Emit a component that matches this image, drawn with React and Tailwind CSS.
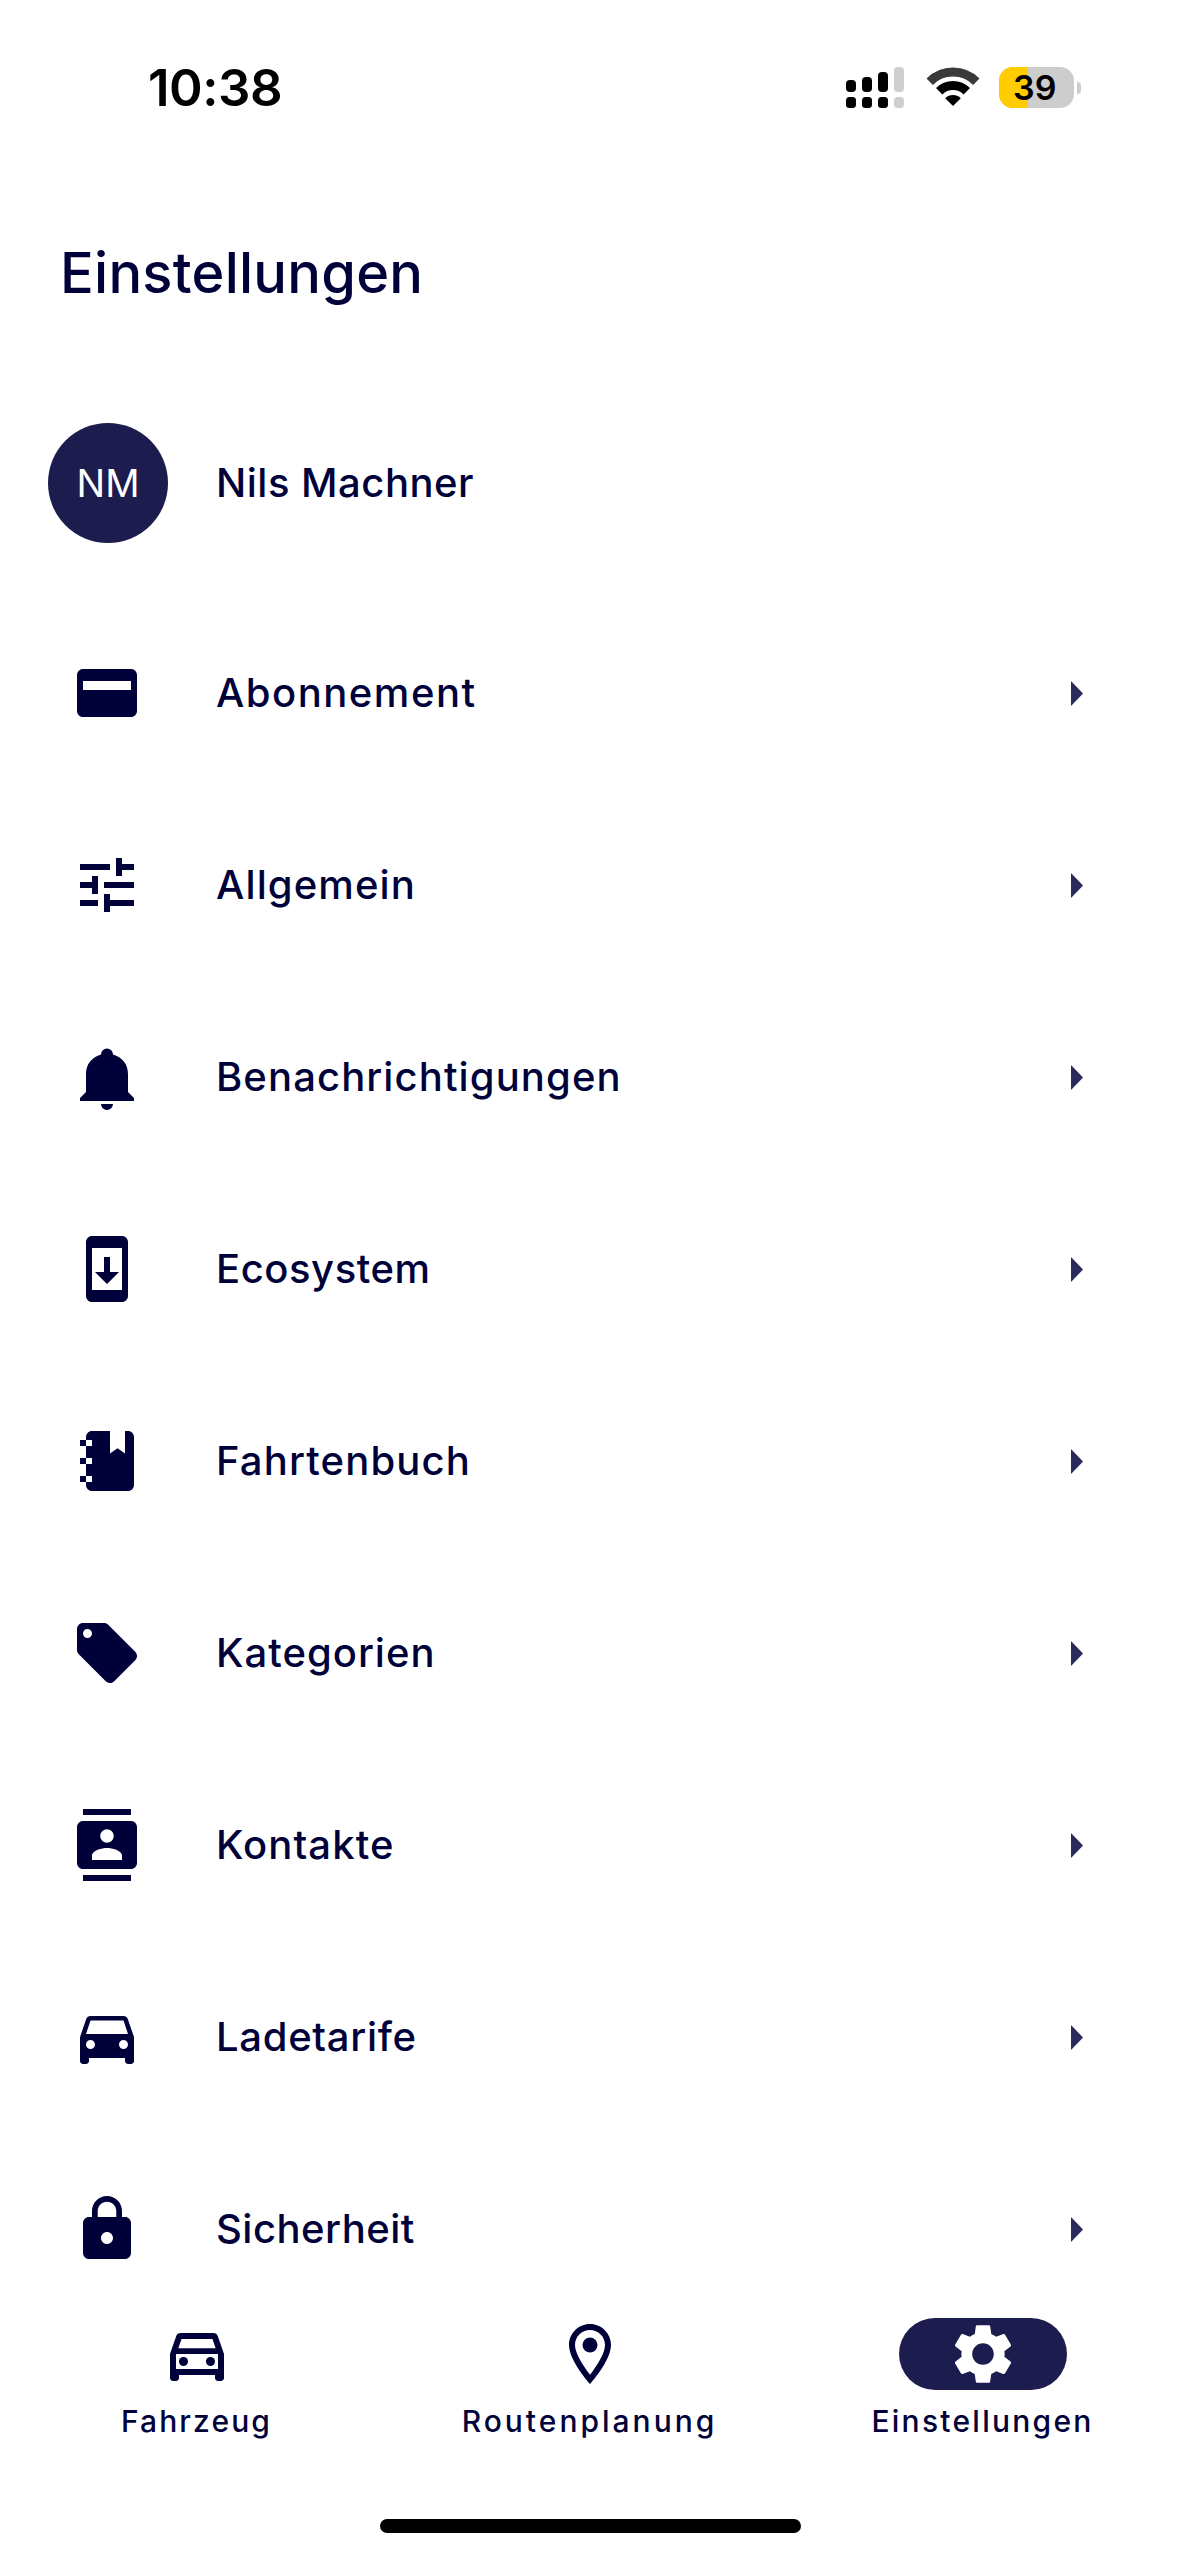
import React from "react";

const Icon = ({ d, children, box = "0 0 24 24", className = "w-[72px] h-[72px] shrink-0 fill-[#01013a]" }) => (
  <svg viewBox={box} className={className}>
    {d && <path d={d} fillRule="evenodd" />}
    {children}
  </svg>
);

const carFilled =
  "M18.92 6.01C18.72 5.42 18.16 5 17.5 5h-11c-.66 0-1.21.42-1.42 1.01L3 12v8c0 .55.45 1 1 1h1c.55 0 1-.45 1-1v-1h12v1c0 .55.45 1 1 1h1c.55 0 1-.45 1-1v-8l-2.08-5.99zM6.5 16c-.83 0-1.5-.67-1.5-1.5S5.67 13 6.5 13s1.5.67 1.5 1.5S7.33 16 6.5 16zm11 0c-.83 0-1.5-.67-1.5-1.5s.67-1.5 1.5-1.5 1.5.67 1.5 1.5-.67 1.5-1.5 1.5zM5 11l1.5-4.5h11L19 11H5z";
const carOutline =
  "M18.92 6.01C18.72 5.42 18.16 5 17.5 5h-11c-.66 0-1.21.42-1.42 1.01L3 12v8c0 .55.45 1 1 1h1c.55 0 1-.45 1-1v-1h12v1c0 .55.45 1 1 1h1c.55 0 1-.45 1-1v-8l-2.08-5.99zM6.85 7h10.29l1.08 3.11H5.77L6.85 7zM19 17H5v-5h14v5z";
const gear =
  "M19.14 12.94c.04-.3.06-.61.06-.94 0-.32-.02-.64-.07-.94l2.03-1.58c.18-.14.23-.41.12-.61l-1.92-3.32c-.12-.22-.37-.29-.59-.22l-2.39.96c-.5-.38-1.03-.7-1.62-.94l-.36-2.54c-.04-.24-.24-.41-.48-.41h-3.84c-.24 0-.43.17-.47.41l-.36 2.54c-.59.24-1.13.57-1.62.94l-2.39-.96c-.22-.08-.47 0-.59.22L2.74 8.87c-.12.21-.08.47.12.61l2.03 1.58c-.05.3-.09.63-.09.94s.02.64.07.94l-2.03 1.58c-.18.14-.23.41-.12.61l1.92 3.32c.12.22.37.29.59.22l2.39-.96c.5.38 1.03.7 1.62.94l.36 2.54c.05.24.24.41.48.41h3.84c.24 0 .44-.17.47-.41l.36-2.54c.59-.24 1.13-.56 1.62-.94l2.39.96c.22.08.47 0 .59-.22l1.92-3.32c.12-.22.07-.47-.12-.61l-2.01-1.58zM12 15.6c-1.98 0-3.6-1.62-3.6-3.6s1.62-3.6 3.6-3.6 3.6 1.62 3.6 3.6-1.62 3.6-3.6 3.6z";

// tracking differs per label, the fallback font is narrower than the original in different letters
const rows = [
  { label: "Abonnement", track: "tracking-[1.5px]", d: "M20 4H4c-1.11 0-1.99.89-1.99 2L2 18c0 1.11.89 2 2 2h16c1.11 0 2-.89 2-2V6c0-1.11-.89-2-2-2zM4 8h16v3H4V8z" },
  { label: "Allgemein", track: "tracking-[1.1px]", d: "M3 17v2h6v-2H3zM3 5v2h10V5H3zm10 16v-2h8v-2h-8v-2h-2v6h2zM7 9v2H3v2h4v2h2V9H7zm14 4v-2H11v2h10zm-6-4h2V7h4V5h-4V3h-2v6z" },
  { label: "Benachrichtigungen", track: "tracking-[1.1px]", box: "21 21 72 72", d: "M30 81v-3l6-6V54c0-10 6-17 15-19.5a6 6 0 0 1 12 0C72 37 78 44 78 54v18l6 6v3zM51 84h12a6 6 0 0 1-12 0z" },
  { label: "Ecosystem", track: "tracking-[0.55px]", d: "M17 1.01 7 1c-1.1 0-2 .9-2 2v18c0 1.1.9 2 2 2h10c1.1 0 2-.9 2-2V3c0-1.1-.9-1.99-2-1.99zM17 19H7V5h10v14zm-1-6h-3V8h-2v5H8l4 4 4-4z" },
  { label: "Fahrtenbuch", track: "tracking-[1.15px]", d: "M7 2h6v7.5l2.5-1.75L18 9.5V2h1c1.1 0 2 .9 2 2v16c0 1.1-.9 2-2 2H7c-1.1 0-2-.9-2-2v-1h2v-2H5v-4h2v-2H5V7h2V5H5V4c0-1.1.9-2 2-2zM3 5h2v2H3zM3 11h2v2H3zM3 17h2v2H3z" },
  { label: "Kategorien", track: "tracking-[1px]", d: "M21.41 11.58l-9-9C12.05 2.22 11.55 2 11 2H4c-1.1 0-2 .9-2 2v7c0 .55.22 1.05.59 1.42l9 9c.36.36.86.58 1.41.58.55 0 1.05-.22 1.41-.59l7-7c.37-.36.59-.86.59-1.41 0-.55-.23-1.06-.59-1.42zM5.5 7C4.67 7 4 6.33 4 5.5S4.67 4 5.5 4 7 4.67 7 5.5 6.33 7 5.5 7z" },
  { label: "Kontakte", track: "tracking-[1.1px]", d: "M20 0H4v2h16V0zM4 24h16v-2H4v2zM20 4H4c-1.1 0-2 .9-2 2v12c0 1.1.9 2 2 2h16c1.1 0 2-.9 2-2V6c0-1.1-.9-2-2-2zm-8 2.75c1.24 0 2.25 1.01 2.25 2.25s-1.01 2.25-2.25 2.25S9.75 10.24 9.75 9 10.76 6.75 12 6.75zM17 17H7v-1.5c0-1.67 3.33-2.5 5-2.5s5 .83 5 2.5V17z" },
  { label: "Ladetarife", track: "tracking-[0.7px]", d: carFilled },
  { label: "Sicherheit", track: "tracking-[0.5px]", d: "M18 8h-1V6c0-2.76-2.24-5-5-5S7 3.24 7 6v2H6c-1.1 0-2 .9-2 2v10c0 1.1.9 2 2 2h12c1.1 0 2-.9 2-2V10c0-1.1-.9-2-2-2zm-6 9c-1.1 0-2-.9-2-2s.9-2 2-2 2 .9 2 2-.9 2-2 2zm3.1-9H8.9V6c0-1.71 1.39-3.1 3.1-3.1 1.71 0 3.1 1.39 3.1 3.1v2z" },
];

const StatusBar = () => (
  <div className="h-[146px] flex items-start justify-between pt-[60px] pl-[148px] pr-[98px]">
    <span className="text-[51px] leading-[56px] font-semibold text-black tracking-[-0.5px]">10:38</span>
    <div className="flex items-center pt-[7px]">
      <svg width="58" height="41" viewBox="0 0 58 41">
        <g fill="#000">
          <rect x="0" y="13" width="10" height="12" rx="4" />
          <rect x="16" y="10" width="10" height="15" rx="4" />
          <rect x="32" y="5" width="10" height="20" rx="4" />
          <rect x="0" y="30" width="10" height="11" rx="3.5" />
          <rect x="16" y="30" width="10" height="11" rx="3.5" />
          <rect x="32" y="30" width="10" height="11" rx="3.5" />
        </g>
        <g fill="#cfcfcf">
          <rect x="48" y="0" width="10" height="25" rx="3.5" />
          <rect x="48" y="30" width="10" height="11" rx="3.5" />
        </g>
      </svg>
      <svg width="54" height="41" viewBox="0 0 54 41" className="ml-[22px]">
        <path d="M3.7 14.7a33 33 0 0 1 46.6 0" fill="none" stroke="#3a3a3a" strokeWidth="9" />
        <path d="M13.2 24.2a19.500 19.500 0 0 1 27.6 0" fill="none" stroke="#000" strokeWidth="9" />
        <path d="M27 39l-7.800-7.800a11 11 0 0 1 15.600 0z" fill="#000" />
      </svg>
      <div className="ml-[19px] flex items-center gap-[3px]">
        <div className="relative w-[75px] h-[41px] rounded-[14px] overflow-hidden bg-[#cdcdcd]">
          <div className="w-[29px] h-full bg-[#ffcc00]" />
          <span className="absolute left-[14px] top-0 leading-[41px] text-[34px] font-semibold text-black">39</span>
        </div>
        <div className="w-[4px] h-[12px] rounded-r-full bg-[#cdcdcd]" />
      </div>
    </div>
  </div>
);

const Row = ({ label, d, box, track }) => (
  <div className="h-[192px] shrink-0 flex items-center pl-[71px] pr-[96px]">
    <Icon d={d} box={box} />
    <span className={`ml-[73px] flex-1 text-[40px] font-medium text-[#01013a] ${track}`}>{label}</span>
    <svg width="12" height="25" viewBox="0 0 12 25" className="fill-[#2b2b5b]">
      <path d="M0 0l12 12.5L0 25z" />
    </svg>
  </div>
);

const Tab = ({ label, track, active, children }) => (
  <div className="flex flex-col items-center">
    <div className={`w-[168px] h-[72px] rounded-full flex items-center justify-center ${active ? "bg-[#1c1c4e]" : ""}`}>
      {children}
    </div>
    <span className={`mt-[11px] text-[30px] leading-[40px] font-medium text-[#01013a] ${track}`}>{label}</span>
  </div>
);

export default function App() {
  return (
    <div className="w-[1179px] h-[2556px] bg-white flex flex-col overflow-hidden font-['Inter',sans-serif]">
      <StatusBar />
      <h1 className="h-[254px] shrink-0 flex items-center pl-[60px] text-[56px] tracking-[0.25px] font-medium text-[#01013a]">Einstellungen</h1>

      <div className="flex-1 min-h-0 overflow-hidden">
        <div className="h-[166px] mb-[31px] flex items-center pl-[48px]">
          <div className="w-[120px] h-[120px] rounded-full bg-[#1c1c4e] flex items-center justify-center text-white text-[38px]">NM</div>
          <span className="ml-[48px] text-[40px] font-medium text-[#01013a] tracking-[0.5px]">Nils Machner</span>
        </div>
        {rows.map((r) => (
          <Row key={r.label} {...r} />
        ))}
      </div>

      <div className="h-[266px] shrink-0 bg-white relative">
        <div className="grid grid-cols-3 pt-[28px]">
          <Tab label="Fahrzeug" track="tracking-[2.1px]">
            <Icon d={carOutline}>
              <circle cx="7.5" cy="14.5" r="1.5" />
              <circle cx="16.5" cy="14.5" r="1.5" />
            </Icon>
          </Tab>
          <Tab label="Routenplanung" track="tracking-[3px]">
            <Icon d="M12 2C8.13 2 5 5.13 5 9c0 5.25 7 13 7 13s7-7.75 7-13c0-3.87-3.13-7-7-7zM7 9c0-2.76 2.24-5 5-5s5 2.24 5 5c0 2.88-2.88 7.19-5 9.88C9.92 16.21 7 11.85 7 9z">
              <circle cx="12" cy="9" r="2.5" />
            </Icon>
          </Tab>
          <Tab label="Einstellungen" track="tracking-[2.25px]" active>
            <Icon d={gear} className="w-[72px] h-[72px] shrink-0 fill-white" />
          </Tab>
        </div>
        <div className="absolute left-[380px] bottom-[23px] w-[421px] h-[14px] rounded-full bg-black" />
      </div>
    </div>
  );
}
